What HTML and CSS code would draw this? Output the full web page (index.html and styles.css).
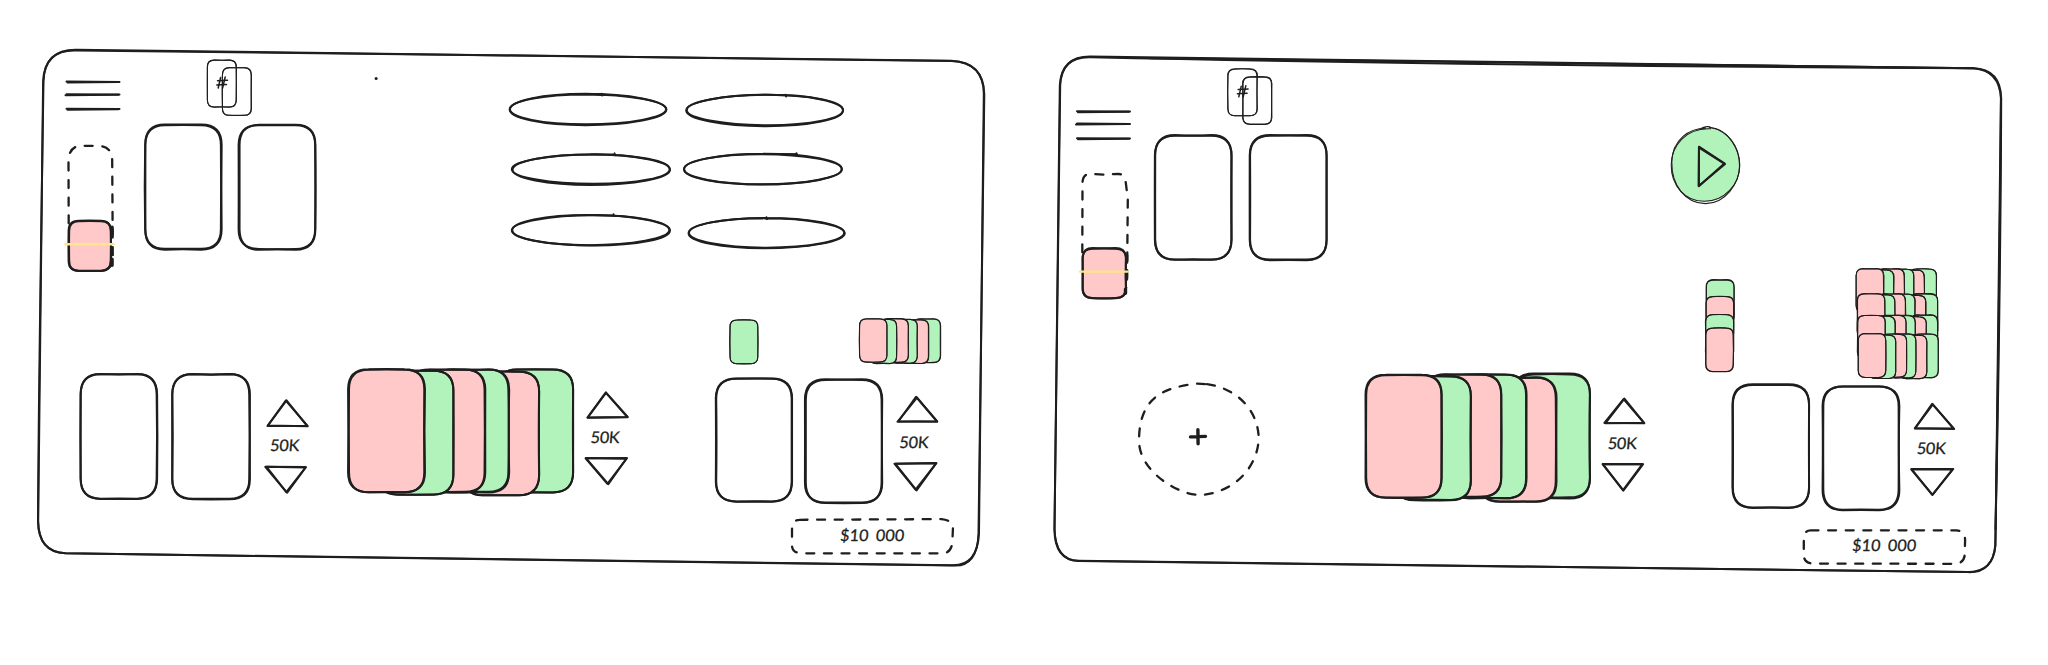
FILE: index.html
```html
<!DOCTYPE html>
<html lang="en">
<head>
<meta charset="utf-8">
<title>Card table wireframes</title>
<link rel="stylesheet" href="styles.css">
</head>
<body>
<main class="board">
  <svg class="screen" id="table" viewBox="0.5 0.7 1024 665" role="img" aria-label="Table screen"></svg>
  <svg class="screen" id="lobby" viewBox="1024.5 0.7 1024 665" role="img" aria-label="Start screen"></svg>
</main>
<script src="sketch.js"></script>
</body>
</html>
```
FILE: styles.css
```css
html, body {
  margin: 0;
  background: #fff;
}
.board {
  display: flex;
  width: 2048px;
  height: 665px;
  overflow: hidden;
}
.screen {
  flex: 0 0 1024px;
  width: 1024px;
  height: 665px;
}
.ink {
  fill: none;
  stroke: #1e1e1e;
  stroke-width: 2;
  stroke-linecap: round;
  stroke-linejoin: round;
}
.ink.thin { stroke-width: 1.05; }
.ink.solid { stroke-width: 2.1; }
.ink.hash { stroke-width: 1.5; }
.ink.dashed { stroke-width: 2.3; stroke-dasharray: 8 9.6; }
.ink.bold { stroke-width: 3.4; }
.marker {
  stroke: #ffe68a;
  stroke-width: 2.4;
  stroke-linecap: round;
}
.red { fill: #ffc9c9; }
.green { fill: #b2f2bb; }
.white { fill: #fff; }
.none { fill: none; }
.dot { fill: #1e1e1e; }
.label {
  fill: #1e1e1e;
  font-family: Lato, "Open Sans", sans-serif;
  font-size: 16px;
  font-weight: 400;
  word-spacing: 3px;
  stroke: #1e1e1e;
  stroke-width: .3;
}
```
FILE: sketch.js
```js
const NS = 'http://www.w3.org/2000/svg';
let svg;
let seed = 7;

function wobble(amount) {
  seed = (seed * 16807) % 2147483647;
  return (seed / 2147483647 - 0.5) * 2 * amount;
}

function add(tag, attrs, text) {
  const el = document.createElementNS(NS, tag);
  for (const key in attrs) el.setAttribute(key, attrs[key]);
  if (text) el.textContent = text;
  svg.appendChild(el);
  return el;
}

const path = (d, cls) => add('path', { d, class: cls });

function roundRect(l, t, r, b, q, a) {
  const w = () => wobble(a);
  const x1 = l + w(), x2 = r + w(), y1 = t + w(), y2 = b + w();
  const mx = (l + r) / 2, my = (t + b) / 2;
  return `M${l + q} ${y1} Q${mx} ${t + w()} ${r - q} ${y1}` +
    `Q${x2} ${y1} ${x2} ${t + q} Q${r + w()} ${my} ${x2} ${b - q}` +
    `Q${x2} ${y2} ${r - q} ${y2} Q${mx} ${b + w()} ${l + q} ${y2}` +
    `Q${x1} ${y2} ${x1} ${b - q} Q${l + w()} ${my} ${x1} ${t + q}` +
    `Q${x1} ${y1} ${l + q} ${y1}Z`;
}

// Two passes of ink over one flat fill give the hand-drawn edge.
function card(l, t, r, b, fill = 'none', q = 20) {
  path(roundRect(l, t, r, b, q, 0), fill);
  path(roundRect(l, t, r, b, q, 0.6), 'ink');
  path(roundRect(l, t, r, b, q, 0.6), 'ink');
}

function miniCard(l, t, r, b, fill = 'none') {
  path(roundRect(l, t, r, b, 7, 0), fill);
  path(roundRect(l, t, r, b, 7, 0.4), 'ink thin');
  path(roundRect(l, t, r, b, 7, 0.4), 'ink thin');
}

// Cards overlap leftwards, so the rightmost one is drawn first.
function fan(rights, tops, bottoms, width, draw) {
  for (let i = rights.length - 1; i >= 0; i--) {
    draw(rights[i] - width, tops[i], rights[i], bottoms[i], i % 2 ? 'green' : 'red');
  }
}

// nib is the x where the pen starts and lands again on the top edge.
function oval(l, t, r, b, nib) {
  const k = 0.5523;
  for (let i = 0; i < 2; i++) {
    const L = l + wobble(0.5), R = r + wobble(0.5), T = t + wobble(0.5), B = b + wobble(0.8);
    const cx = (L + R) / 2 + wobble(4), cy = (T + B) / 2;
    const rx = (R - L) / 2 * k, ry = (B - T) / 2 * k;
    path(`M${nib} ${T + 0.4} L${cx} ${T} C${cx - rx} ${T} ${L} ${cy - ry} ${L} ${cy}` +
      `S${cx - rx} ${B} ${cx} ${B} S${R} ${cy + ry} ${R} ${cy} S${cx + rx} ${T} ${cx} ${T}`, 'ink');
  }
  path(`M${nib} ${t - 0.6}L${nib + 0.6} ${t + 1.2}`, 'ink');
}

function triangle(a, b, c) {
  for (let i = 0; i < 2; i++) {
    const p = [a, b, c].map(([x, y]) => `${x + wobble(0.8)} ${y + wobble(0.6)}`);
    path(`M${p[0]}L${p[1]}L${p[2]}Z`, 'ink');
  }
}

function label(x, y, width, text) {
  add('text', {
    class: 'label', textLength: width, lengthAdjust: 'spacing',
    transform: `translate(${x} ${y}) skewX(-5)`
  }, text);
}

function stepper(up, down, tx, ty) {
  triangle([up[0], up[3]], [up[1], up[2]], [up[4], up[3]]);
  label(tx - 0.3, ty, 29, '50K');
  triangle([down[0], down[2]], [down[1], down[2]], [down[3], down[4]]);
}

function menu(x, ys) {
  ys.forEach((y, i) => {
    path(`M${x} ${y}L${x + 53} ${y + 0.3}`, 'ink');
    path(`M${x + (i === 1 ? -1 : 1)} ${y + 1}L${x + 52} ${y + 0.4}`, 'ink');
  });
}

function deck(x, y) {
  miniCard(x, y, x + 29.2, y + 47);
  miniCard(x + 15, y + 8, x + 44, y + 55.5);
  [[13.4, 17.5, 11, 28], [18, 17, 15.4, 28], [10.4, 20.7, 20.3, 20.2], [9.6, 25, 19.3, 24.5]].forEach(
    ([a, b, c, d]) => path(`M${x + a} ${y + b}L${x + c} ${y + d}`, 'ink hash'));
}

/* Table screen */
svg = document.getElementById('table');
path('M77 50.5 Q500 55.5 952 61.8 Q984.5 63 984.3 95 Q982.5 300 979.5 534 Q978 567 952 566 Q500 559 66 554 Q39 553 38.5 522 Q39 400 44 82 Q45 50 77 50.5Z', 'ink');
path('M77 51.2 Q500 56.5 952 61.5 Q984 63 984.8 95 Q982 300 979 534 Q978 567 955 566.3 Q500 560.5 66 554 Q39 553 38.7 522 Q41.5 300 43.6 82 Q45 50 77 51.2Z', 'ink');
menu(67, [82.3, 95, 109.5]);
deck(207.7, 60.7);
add('circle', { cx: 376.6, cy: 79.3, r: 1.5, class: 'dot' });
path('M69.2 224 L69 163 Q69 146.5 82 146.5 L98 146.5 Q112.5 146.5 112.7 161 L113.3 259 Q113 271 100 271 L80 271', 'ink dashed');
card(69.2, 221.5, 111.5, 271.5, 'red', 10);
path('M112.6 228V235M112.6 260V266', 'ink bold');
path('M66 245H114', 'marker');
card(145.3, 125.7, 221.7, 250);
card(239.6, 125.7, 316.2, 250);
oval(510, 95, 666.5, 125.3, 602);
oval(687, 96, 843.5, 126.5, 786);
oval(512.7, 154.7, 670, 185.3, 615);
oval(684.7, 154.5, 842, 185.3, 797);
oval(512.5, 215.5, 670, 246, 614);
oval(689, 218.5, 845, 249, 767);
card(80.9, 375.3, 157.7, 499.3);
card(173.2, 375.3, 250.2, 500);
stepper([268.5, 287, 401.5, 426.3, 307.8], [266.3, 306.5, 468, 287.6, 493.5], 270.6, 452);
fan([425, 454, 485.5, 509.3, 539.3, 573.3], [370, 371, 370.3, 370.3, 372, 370],
  [493.2, 495, 493, 493, 495.7, 493], 76, card);
stepper([588, 606, 393, 417.8, 627.8], [586, 627.5, 459.2, 608.6, 485], 591, 443.2);
miniCard(730.2, 320.5, 758.6, 364.5, 'green');
fan([887.3, 897.3, 908.7, 917.7, 929, 941], [319.3, 320, 319.5, 320, 320.5, 319.5],
  [363, 364, 363, 363.8, 364, 363.2], 27.5, miniCard);
card(716.8, 379.2, 792.4, 502.3);
card(806, 380.5, 882.3, 503.5);
stepper([898.3, 917, 398, 422.5, 937], [895.5, 936.5, 464.3, 916.4, 490.5], 899.8, 448.5);
path('M800 520.5 L942 519.8 Q954 521 953.4 530 L952.8 544 Q951 554.5 942 554 L803 554 Q792 554 792.5 545 L792.5 530 Q793 520.5 800 520.5', 'ink dashed');
label(840.3, 541.7, 64, '$10 000');

/* Start screen */
svg = document.getElementById('lobby');
path('M1091 57.3 Q1490 62.5 1974 69 Q2001 70 2001.7 99 Q2001 300 1995.7 546 Q1994 573 1968 572.8 Q1500 568 1079 561.5 Q1055 561 1055 530 Q1056 390 1060.3 86 Q1062 57 1091 57.3Z', 'ink');
path('M1091 58 Q1490 66.5 1974 69 Q2000 71 2001.4 99 Q1998 300 1996 546 Q1993 574 1968 572.8 Q1500 566.5 1079 561.8 Q1056 561 1055 530 Q1058.5 300 1060.7 86 Q1062 57 1091 58Z', 'ink');
path('M1150 58.8 Q1490 64 1974 69', 'ink solid');
path('M2001.5 99 Q2000 300 1996 530', 'ink');
menu(1077.5, [112, 124.3, 139]);
deck(1228.3, 69.5);
path('M1082.8 253 L1083 184 Q1083 174.5 1091 174.5 L1104 175.3 L1119 174.7 Q1125.5 174.5 1126.5 185 L1128.3 200 L1127.5 284 Q1126 299 1115 299', 'ink dashed');
card(1083, 249, 1126, 299, 'red', 10);
path('M1127.2 256V263M1127 274V280M1126 290V294', 'ink bold');
path('M1080.5 272.3H1128', 'marker');
card(1155.4, 136.2, 1232, 260.2);
card(1250.7, 136.2, 1327.2, 260.5);

path('M1706 128.7C1726 128.7 1740.3 146 1740.3 166S1725 202.5 1706 202.5S1672 187 1672 166S1686 128.7 1706 128.7', 'green');
path('M1710 128.2C1727 129 1740.3 147 1740.3 166S1725 202 1705 202S1671.7 186 1671.7 166S1687 128.3 1711 129.5', 'ink thin');
path('M1700 130C1704 128 1708 126 1712 128.5C1730 132 1740.3 150 1740 167S1726 204.3 1706 204.3S1672 186 1672.3 163S1690 129 1706 129', 'ink thin');
triangle([1700, 147.8], [1725, 164.7], [1699.7, 186.7]);

fan([1442.5, 1471.2, 1502, 1526.7, 1556.5, 1590.3], [375.4, 376.7, 375.5, 375.5, 378.3, 374.7],
  [498.7, 501, 498, 499, 502.3, 498.6], 76.3, card);
stepper([1605.3, 1624.3, 399.8, 423.5, 1645], [1603, 1643.5, 465.2, 1624, 491.3], 1608.2, 450);

path('M1205.5 384.8 L1198 384.3 C1165 388 1139 397 1139.5 443 C1141 473 1179 495.5 1200 495.7 C1235 494 1259 467 1259.2 438 C1258 410 1237 388 1204 384.3', 'ink dashed');
path('M1191 437.6L1206 437.1M1198.4 430.5L1198.6 444.5', 'ink bold');

miniCard(1706.7, 280.6, 1734.6, 324, 'green');
miniCard(1706.5, 297, 1734.3, 341, 'red');
miniCard(1706.3, 315.5, 1734, 359, 'green');
miniCard(1706.3, 328.5, 1734, 372.3, 'red');
[[1856.5, 269.5], [1857.7, 294.5], [1858, 315.9], [1858.7, 334.5]].forEach(([x, y]) => {
  fan([27.6, 37.7, 48.5, 57.8, 68.5, 80.3].map(v => x + v), [0, 1.2, 0.3, 0.3, 1.5, 0].map(v => y + v),
    [43.5, 44.5, 43.5, 44, 44.8, 43.8].map(v => y + v), 27.5, miniCard);
});

card(1733.4, 385.2, 1809.2, 508.3);
card(1823.4, 386.8, 1899.3, 510.4);
stepper([1915, 1932.7, 405, 429.2, 1954.5], [1912.5, 1953.2, 470.2, 1932.7, 495.5], 1917.2, 455);
path('M1811 531 L1957 531 Q1965.5 532 1965.6 541 L1965.2 555 Q1965 564.5 1954 564.5 L1815 564.3 Q1804 564.5 1804.3 555 L1804.3 540 Q1804.5 531 1811 531', 'ink dashed');
label(1852.2, 551.7, 64, '$10 000');
```
